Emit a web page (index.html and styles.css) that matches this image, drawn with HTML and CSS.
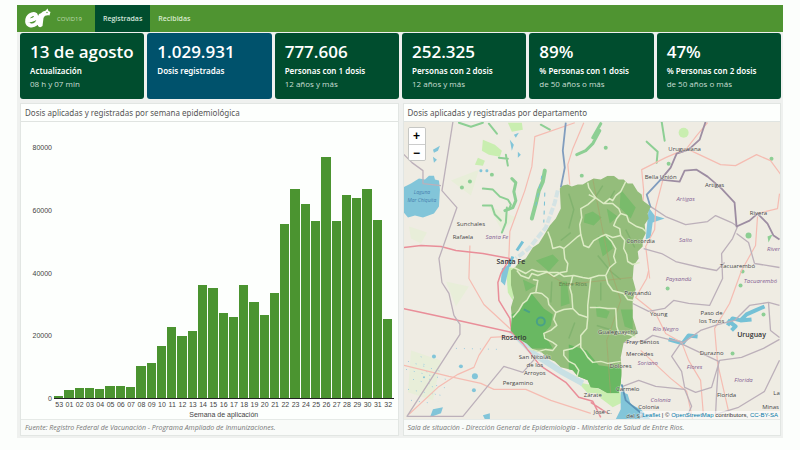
FILE: index.html
```html
<!DOCTYPE html>
<html lang="es">
<head>
<meta charset="utf-8">
<meta name="viewport" content="width=device-width, initial-scale=1">
<title>COVID19 - Dosis registradas</title>
<link rel="stylesheet" href="styles.css">
</head>
<body>
<div class="dashboard">
  <nav class="navbar">
    <a class="brand" href="#">
      <svg class="logo" viewBox="0 0 28 22" aria-hidden="true">
        <path d="M3.500 12.500C9 12.500 12.500 10.500 12 7.500C11.500 4.500 4.500 6 3.300 11.500C2.300 17 7.500 19.500 12.500 15.500C14.500 13.500 15 10 16.500 7.500" fill="none" stroke="#fff" stroke-width="4" stroke-linecap="round"/>
        <path d="M14 18C14 13 14.500 6 19 3.500L21.500 2.800L23.500 0.500L24.500 3L26.500 4L25.500 7.500C23 7 20.500 7.500 19.500 10L18.500 18C17 19.500 15 19.500 14 18Z" fill="#fff"/>
        <circle cx="23" cy="4.500" r="0.700" fill="#4f9431"/>
      </svg>
      <span>COVID19</span>
    </a>
    <a class="tab active" href="#">Registradas</a>
    <a class="tab" href="#">Recibidas</a>
  </nav>

  <main>
    <section class="cards">
      <article class="card"><h2>13 de agosto</h2><h3>Actualización</h3><p>08 h y 07 min</p></article>
      <article class="card blue"><h2>1.029.931</h2><h3>Dosis registradas</h3></article>
      <article class="card"><h2>777.606</h2><h3>Personas con 1 dosis</h3><p>12 años y más</p></article>
      <article class="card"><h2>252.325</h2><h3>Personas con 2 dosis</h3><p>12 años y más</p></article>
      <article class="card"><h2>89%</h2><h3>% Personas con 1 dosis</h3><p>de 50 años o más</p></article>
      <article class="card"><h2>47%</h2><h3>% Personas con 2 dosis</h3><p>de 50 años o más</p></article>
    </section>

    <section class="panels">
      <article class="panel">
        <h4>Dosis aplicadas y registradas por semana epidemiológica</h4>
        <div class="chart">
          <div class="y-axis"><span>80000</span><span>60000</span><span>40000</span><span>20000</span><span>0</span></div>
          <div class="bars">
            <i style="height:1%"></i><i style="height:3.2%"></i><i style="height:4%"></i><i style="height:4%"></i><i style="height:3.6%"></i><i style="height:4.800%"></i><i style="height:4.800%"></i><i style="height:4.400%"></i><i style="height:12.800%"></i><i style="height:14.200%"></i><i style="height:20.800%"></i><i style="height:28.400%"></i><i style="height:24.800%"></i><i style="height:26.800%"></i><i style="height:45.200%"></i><i style="height:44%"></i><i style="height:34%"></i><i style="height:32.400%"></i><i style="height:45.200%"></i><i style="height:38.600%"></i><i style="height:33.200%"></i><i style="height:42.200%"></i><i style="height:69.600%"></i><i style="height:83.600%"></i><i style="height:77.800%"></i><i style="height:70.800%"></i><i style="height:96.400%"></i><i style="height:71%"></i><i style="height:81.200%"></i><i style="height:80.200%"></i><i style="height:83.600%"></i><i style="height:71.400%"></i><i style="height:31.600%"></i>
          </div>
          <div class="x-axis">
            <span>53</span><span>01</span><span>02</span><span>03</span><span>04</span><span>05</span><span>06</span><span>07</span><span>08</span><span>09</span><span>10</span><span>11</span><span>12</span><span>13</span><span>14</span><span>15</span><span>16</span><span>17</span><span>18</span><span>19</span><span>20</span><span>21</span><span>22</span><span>23</span><span>24</span><span>25</span><span>26</span><span>27</span><span>28</span><span>29</span><span>30</span><span>31</span><span>32</span>
          </div>
          <div class="axis-title">Semana de aplicación</div>
        </div>
        <footer>Fuente: Registro Federal de Vacunación - Programa Ampliado de Inmunizaciones.</footer>
      </article>

      <article class="panel">
        <h4>Dosis aplicadas y registradas por departamento</h4>
        <div class="map">
          <svg class="tiles" viewBox="403 121 377 298" preserveAspectRatio="xMidYMid slice" role="img" aria-label="Mapa de Entre Ríos por departamento">
            <rect x="300" y="50" width="600" height="450" fill="#efece3"/>
            <!-- farmland and wetlands -->
            <g fill="#c9eeb0">
              <path d="M482 139L494 144L501 150L499 156L488 154L481 150Z"/>
              <path d="M477 157L484 160L482 165L474 164Z"/>
              <path d="M507 122L521 122L522 129L511 131Z"/>
              <circle cx="683" cy="132" r="5"/>
              <path d="M505 266L515 268L512 300L507 292Z"/>
              <path d="M590 386L607 392L619 391L622 402L612 407L600 398Z"/>
              <path d="M577 382L592 385L602 393L587 393Z"/>
            </g>
            <g fill="#e8eed9">
              <path d="M408 226L426 232L420 243L410 238Z"/><path d="M445 281L468 286L455 306Z"/><path d="M410 350L440 360L432 400L407 392Z"/><path d="M487 205L516 217L501 230Z"/><path d="M450 180L478 169L470 195Z"/>
            </g>
            <g fill="none" stroke="#8dcf94" stroke-width="2" stroke-linejoin="round" stroke-linecap="round">
              <path d="M482 188L492 189L499 196L507 199L510 204L508 209"/>
              <path d="M511 178L515 182L513 191L515 200L512 207L504 210" stroke-width="3"/>
              <path d="M482 205L491 205L494 214L500 220M506 207L505 222L501 232"/>
              <path d="M544 170L542 181L538 190L535 203L531 218" stroke-width="4"/>
              <path d="M505 154L507 165M498 157L507 158"/>
              <path d="M599 130L592 143L585 150L576 154M600 123L592 137" stroke-width="3"/>
              <path d="M661 121L664 140M646 141L657 151L656 162"/>
              <path d="M458 122L470 126L482 122M488 123L496 133M540 124L549 129"/>
            </g>
            <g fill="#8dcf94"><circle cx="469" cy="181" r="2"/><circle cx="461" cy="187" r="2"/><circle cx="491" cy="174" r="2"/><circle cx="581" cy="175" r="2"/><circle cx="605" cy="147" r="2"/><circle cx="668" cy="163" r="2"/><circle cx="742" cy="271" r="2"/><circle cx="748" cy="235" r="3"/><path d="M767 236L772 234L768 242Z"/><circle cx="667" cy="288" r="2"/><circle cx="732" cy="353" r="2"/><circle cx="740" cy="285" r="2"/><circle cx="763" cy="314" r="2"/><circle cx="771" cy="158" r="2"/></g>
            <!-- water -->
            <g fill="#82c5d9">
              <path d="M402 187L410 183L418 178L424 179L428 175L433 175L434 179L438 180L439 189L438 206L433 213L422 217L414 215L407 217L402 211Z"/>
              <path d="M432 149L439 145L437 150L433 152ZM432 156L436 159L433 162Z"/>
              <circle cx="480" cy="170" r="1.500"/><circle cx="486" cy="170" r="1.500"/>
              <path d="M509 139L513 144L511 150ZM517 151L520 154L517 157ZM513 134L518 132L515 137Z"/>
              <path d="M432 409L442 407L440 413L429 417ZM482 415L489 413L489 419L484 419Z"/>
              <circle cx="433" cy="356" r="2"/><circle cx="460" cy="366" r="2"/><circle cx="474" cy="376" r="3"/><circle cx="473" cy="390" r="2"/><circle cx="423" cy="377" r="1"/>
              <path d="M620 391L627 394L630 404L640 409L650 419H615L620 409Z"/>
              <path d="M648 207L654 215L664 218L652 222L650 237L645 239Z"/>
              <path d="M501 268L509 264L504 285L500 281Z"/>
            </g>
            <g fill="none" stroke="#75c1d6" stroke-width="4" stroke-linejoin="round">
              <path d="M727 325L732 318L740 320L746 314L755 310L764 306M727 320L735 326L731 330M740 320L751 319M668 339L682 343L688 335L697 336"/>
              <path d="M516 250L522 241M512 256L508 266" stroke-width="3"/>
              <path d="M557 190L554 202L545 227L528 248L515 258" stroke="#d4e3e4" stroke-width="4" stroke-dasharray="7 2"/>
              <path d="M541 175L535 205M544 192L543 222" stroke-width="1" stroke-dasharray="4 5"/>
              <path d="M510 330L534 354L560 371L582 383" stroke="#c8e0e4" stroke-width="6"/>
            </g>
            <g fill="none" stroke="#9dcce0" stroke-dasharray="1 7"><path d="M407 361L443 372M405 369L449 380M412 379L450 389M407 389L440 395M410 400L431 403M420 356L437 401M455 348L500 349"/></g>
            <!-- roads -->
            <g fill="none" stroke="#f5bcb2" stroke-width="1.200" stroke-linejoin="round">
              <path d="M574 122L534 136L531 166L524 190L509 231L508 257"/>
              <path d="M583 122L572 148L567 164L569 184"/>
              <path d="M641 220L643 190L641 169L665 157L686 148L696 135L707 122M686 148L720 164L735 165L756 154L770 160L781 175"/>
              <path d="M662 180L655 207L654 229L645 246L649 278"/>
              <path d="M757 216L755 245L741 270L729 303L714 328L717 363L728 411M779 193L777 208L757 213"/>
              <path d="M648 270L646 278L635 297L655 313L665 333L681 342L688 360L700 380L703 417"/>
              <path d="M640 350L670 378L686 391L692 419"/>
              <path d="M469 245L468 278L483 304L510 329M510 336L490 337L478 355L473 367L457 374L437 387L408 414"/>
              <path d="M403 365L448 376L480 383L493 389L525 389L550 400L590 413"/>
            </g>
            <g fill="none" stroke="#e98e99" stroke-width="1.500" stroke-linejoin="round">
              <path d="M402 247L420 245L440 246L455 250L482 253L509 258L500 273L497 282L498 300L509 318L511 333"/>
              <path d="M402 308L416 311L453 319L511 332L522 343L539 365L565 382L578 397L592 401L600 417M590 402L607 413"/>
            </g>
            <!-- borders -->
            <g fill="none" stroke="#bcb0ba" stroke-width="1.300" stroke-linejoin="round">
              <path d="M452 121L441 190L456 207L438 258L441 282L448 293L453 315L459 324V334L406 416H462L503 366L522 372L537 355"/>
              <path d="M402 153L411 162L422 170V183L440 185"/>
              <path d="M650 206L665 216L685 224L707 221L715 215L731 222L737 226L732 238L721 253L722 278L709 305L688 303L673 300L664 308L648 311L632 303"/>
              <path d="M643 248L661 253L675 261L700 267L716 270L724 262M736 233L748 242L754 263L779 267"/>
              <path d="M622 342L643 341L652 335L668 339L683 342L700 330L718 324L734 320L749 305L768 302L779 305M768 302L770 330L779 337"/>
              <path d="M680 343L671 356L681 371L684 387L695 392L711 387L719 360L741 357L763 348L779 339M680 343L718 361L716 393L715 414L738 407L764 391L779 360"/>
              <path d="M622 386L638 380L655 386L684 389L691 406L686 417"/>
            </g>
            <g fill="none" stroke="#9d8da2" stroke-width="1.800" stroke-linejoin="round">
              <path d="M705 121L699 139L688 149L676 153L670 167L660 179L679 181L684 170L696 169L707 176L721 188L734 202L736 226L749 220L757 213L767 223L773 235L779 239"/>
              <path d="M565 122L562 150L564 167L560 187M660 179L646 194L650 207" stroke="#819dbe"/>
              <path d="M621 384L625 400L643 415" stroke="#5c93b6"/>
            </g>
            <!-- province -->
            <clipPath id="province"><path d="M559 188L562 185L567 184L571 186L577 184L582 184L587 181L593 178L600 179L607 175L613 175L618 179L623 179L627 183L632 183L637 191L641 194L642 200L650 206L647 213L648 218L644 224L645 233L642 239L642 246L637 251L638 258L633 265L632 278L635 289L632 300V317L637 333L623 342L620 357L621 370L620 383L618 393L607 393L598 388L590 387L587 380L577 376L572 370L560 367L554 361L547 358L541 352L533 350L526 343L517 338L510 330L511 317L510 307L513 297L510 284V270L514 267L519 261L525 258L532 247L538 243L543 235L549 225L555 218L560 208Z"/></clipPath>
            <g clip-path="url(#province)">
              <rect x="500" y="170" width="155" height="230" fill="#94bd7b"/>
              <g fill="#79bb6b">
                <path d="M508 315L519 310L530 292L543 308L552 314L550 325L543 333L552 348H525L508 332Z" fill="#69b862"/>
                <path d="M568 344L586 350L598 365L620 368L625 398H589L568 376Z" fill="#69b862"/>
                <path d="M584 214L592 211L601 217L593 225L583 222ZM606 208L617 216L609 223ZM620 189L635 207L630 218L619 207Z"/>
                <path d="M535 260L552 254L558 260L548 271ZM522 279L535 285L525 291ZM597 236L609 235L612 248L602 256Z"/>
                <path d="M560 281L566 281L569 303L560 306ZM595 305L609 311L606 318L596 316ZM620 309L632 309V329L624 326Z"/>
              </g>
              <g fill="none" stroke="#82b36f" stroke-width="1.500"><path d="M568 193L573 209L568 228M570 232L560 240M597 255L610 271L620 279M574 322L568 338M551 281L550 302M625 229L634 247M596 325L609 329M600 282V300M602 185L595 196M614 190L607 202"/></g>
              <g fill="none" stroke="#49a187" stroke-width="2"><circle cx="540" cy="321" r="4"/><path d="M523 309L529 312"/></g>
              <path d="M592 178L600 220L610 270L620 300L606 340L610 395M543 271L565 284L631 277" fill="none" stroke="#a99f68" stroke-width=".6"/>
            </g>
            <g fill="none" stroke="#dcebc4" stroke-width="1.500" stroke-linejoin="round">
              <path d="M587 182L588 187L592 193L595 197L587 204L580 208L581 217L579 224L580 234L577 236L569 243L563 248L559 246L552 248L550 239L547 231"/>
              <path d="M580 234L583 245L588 247L593 240L600 236L605 234L612 237L620 235M563 248L564 258L567 263L566 271L560 272L553 276L546 271L537 271L531 269L525 273L519 270L513 267"/>
              <path d="M588 194L596 198L603 203L609 198L612 200L615 195L620 191L625 181M603 203L612 203L618 208L620 213L616 218L613 225L619 228L620 235L624 240L623 248L626 254L627 261L632 264L639 262M620 213L626 215L628 221L636 226L642 228L645 231M605 235L611 241L615 248L613 256L615 262L609 267L605 275L607 283L612 290L623 293L627 299L633 300"/>
              <path d="M516 270L520 275L528 278L531 273L537 275L545 272L557 272L563 276L573 275L582 277L588 278L598 275L605 275M532 279L537 280L535 292L530 293L526 300L522 303L518 310L512 317M535 292L541 293L547 298L548 304L555 312L563 309L572 308L571 294L569 287L572 275M555 312L553 319L556 325L550 330L543 333L544 338L552 342L556 345L552 350L545 349L538 351L527 348M572 308L578 314L587 317L587 305L590 278M587 317L586 328L580 335V347L584 352L587 357L592 362L600 361L607 363L620 361M580 343L572 348L563 350L563 355L568 361L574 364L578 370L576 377M589 307H599L607 308H615L616 326L618 332L628 334L635 337"/>
            </g>
            <!-- region names -->
            <g class="region">
              <text x="496" y="238">Santa Fe</text><text x="685" y="200">Artigas</text><text x="685" y="241">Salto</text><text x="678" y="281">Paysandú</text><text x="760" y="283">Tacuarembó</text><text x="665" y="331">Río Negro</text><text x="647" y="365">Soriano</text><text x="694" y="369">Flores</text><text x="743" y="382">Florida</text><text x="660" y="402">Colonia</text><text x="773" y="250">River</text>
            </g>
            <g class="water-name"><text x="421" y="193">Laguna</text><text x="421" y="201">Mar Chiquita</text></g>
            <text class="province-name" x="572" y="286">Entre Ríos</text>
            <!-- towns -->
            <g class="town">
              <text x="470" y="225">Sunchales</text><text x="462" y="238">Rafaela</text><text x="684" y="150">Uruguaiana</text><text x="660" y="178">Bella Unión</text><text x="714" y="186">Artigas</text><text x="758" y="214">Rivera</text><text x="640" y="242">Concordia</text><text x="737" y="268">Tacuarembó</text><text x="637" y="295">Paysandú</text><text x="658" y="316">Young</text><text x="711" y="315">Paso de</text><text x="711" y="323">los Toros</text><text x="617" y="334">Gualeguaychú</text><text x="642" y="344">Fray Bentos</text><text x="639" y="356">Mercedes</text><text x="711" y="355">Durazno</text><text x="620" y="368">Dolores</text><text x="627" y="391">Carmelo</text><text x="726" y="397">Florida</text><text x="534" y="359">San Nicolás</text><text x="534" y="367">de los</text><text x="534" y="375">Arroyos</text><text x="517" y="385">Pergamino</text><text x="592" y="397">Zárate</text><text x="602" y="414">José C.</text><text x="648" y="409">Colonia</text><text x="634" y="418">del Sa</text><text x="776" y="395">La</text><text x="770" y="409">Minas</text>
            </g>
            <g class="city"><text x="510" y="264">Santa Fe</text><text x="513" y="340">Rosario</text><text x="751" y="337">Uruguay</text></g>
          </svg>
          <div class="zoom"><button type="button" aria-label="Acercar">+</button><button type="button" aria-label="Alejar">−</button></div>
          <div class="attribution"><a href="#">Leaflet</a> | © <a href="#">OpenStreetMap</a> contributors, <a href="#">CC-BY-SA</a></div>
        </div>
        <footer>Sala de situación - Dirección General de Epidemiología - Ministerio de Salud de Entre Ríos.</footer>
      </article>
    </section>
  </main>
</div>
</body>
</html>
```
FILE: styles.css
```css
* { box-sizing: border-box; }

body {
  margin: 0;
  background: #fcfefc;
  font-family: "Open Sans", "Noto Sans", sans-serif;
  font-size: 7px;
  color: #555;
}

h2, h3, h4, p { margin: 0; }
a { text-decoration: none; }

.dashboard {
  display: flex;
  flex-direction: column;
  min-height: 100vh;
  padding: 5px 17px 12px;
}

.navbar {
  display: flex;
  height: 27px;
  background: #4f9431;
  font-size: 7px;
}

.navbar a {
  display: flex;
  align-items: center;
  color: #d9ebcf;
}

.navbar .brand {
  gap: 5px;
  padding: 0 13px 0 7px;
  font-size: 6px;
  color: #c1deb4;
}

.logo { width: 28px; height: 22px; }

.navbar .tab { padding: 0 8px; font-weight: 600; }
.navbar .active { background: #004d2e; color: #d5e6dc; }

main {
  flex: 1;
  display: flex;
  flex-direction: column;
  gap: 4px;
  padding: 1px 2px 2px 3px;
  background: #eff1ef;
}

.cards {
  display: grid;
  grid-template-columns: repeat(6, minmax(0, 1fr));
  gap: 3px;
}

.card {
  height: 66px;
  padding: 7px 10px;
  border-radius: 3px;
  background: #004d2e;
  color: #fff;
  white-space: nowrap;
}

.card.blue { background: #00526c; }
.card h2 { font-size: 17px; line-height: 24px; font-weight: 600; }
.card h3 { font-family: "Noto Sans", sans-serif; font-size: 8px; line-height: 14px; font-weight: 600; }
.card p { font-size: 8px; line-height: 11px; color: #c9dfd4; }

.panels {
  flex: 1;
  display: grid;
  grid-template-columns: 1fr 1fr;
  gap: 4px;
}

.panel {
  display: flex;
  flex-direction: column;
  min-width: 0;
  background: #fdfffd;
  border: 1px solid #e2e6e3;
}

.panel h4 {
  padding: 0 4px;
  border-bottom: 1px solid #e0e4e1;
  font-family: "Noto Sans", sans-serif;
  font-size: 8px;
  line-height: 17px;
  font-weight: 400;
}

.panel footer {
  padding: 0 4px;
  border-top: 1px solid #e6eae7;
  background: #f9fbf9;
  font-size: 7px;
  line-height: 15px;
  font-style: italic;
  color: #777;
  white-space: nowrap;
}

.chart {
  flex: 1;
  display: grid;
  grid-template-columns: 20px 1fr;
  grid-template-rows: 1fr 10px 10px;
  column-gap: 2px;
  padding: 26px 4px 0 11px;
  font-family: "Liberation Sans", sans-serif;
  font-size: 7px;
  line-height: 10px;
  color: #444;
}

.y-axis {
  display: flex;
  flex-direction: column;
  justify-content: space-between;
  margin: -5px 0;
  text-align: right;
}

.bars {
  display: flex;
  align-items: flex-end;
  border-bottom: 1px solid #222;
}

.bars i {
  flex: 1;
  background: #4b9430;
  border: solid #fdfffd;
  border-width: 0 1px 0 0;
}

.x-axis { grid-column: 2; display: flex; line-height: 12px; }
.x-axis span { flex: 1; text-align: center; }
.axis-title { grid-column: 2; text-align: center; line-height: 12px; }

.map { position: relative; flex: 1; }

.tiles {
  position: absolute;
  width: 100%;
  height: 100%;
}

.tiles text { text-anchor: middle; paint-order: stroke; }
.town { font-size: 6px; fill: #444; stroke: #f5f3ec; stroke-width: 1px; stroke-opacity: .5; }
.region { font-size: 6px; font-style: italic; fill: #856294; }
.city { font-size: 7px; font-weight: 600; fill: #333; }
.water-name { font-size: 5px; font-style: italic; fill: #477fae; }
.province-name { font-size: 6px; fill: #5d814c; }

.zoom {
  position: absolute;
  top: 5px;
  left: 4px;
  border: 1px solid #c6c7c4;
  border-radius: 2px;
  overflow: hidden;
}

.zoom button {
  display: block;
  width: 16px;
  height: 16px;
  padding: 0;
  border: 0;
  background: #fff;
  color: #000;
  font: bold 12px/16px "Liberation Sans", sans-serif;
}

.zoom button + button { border-top: 1px solid #ccc; }

.attribution {
  position: absolute;
  right: 0;
  bottom: 0;
  padding: 0 2px;
  background: rgb(255 255 255 / 60%);
  font-family: "Liberation Sans", sans-serif;
  font-size: 6px;
  line-height: 8px;
  color: #333;
}

.attribution a { color: #0078a8; }
```
